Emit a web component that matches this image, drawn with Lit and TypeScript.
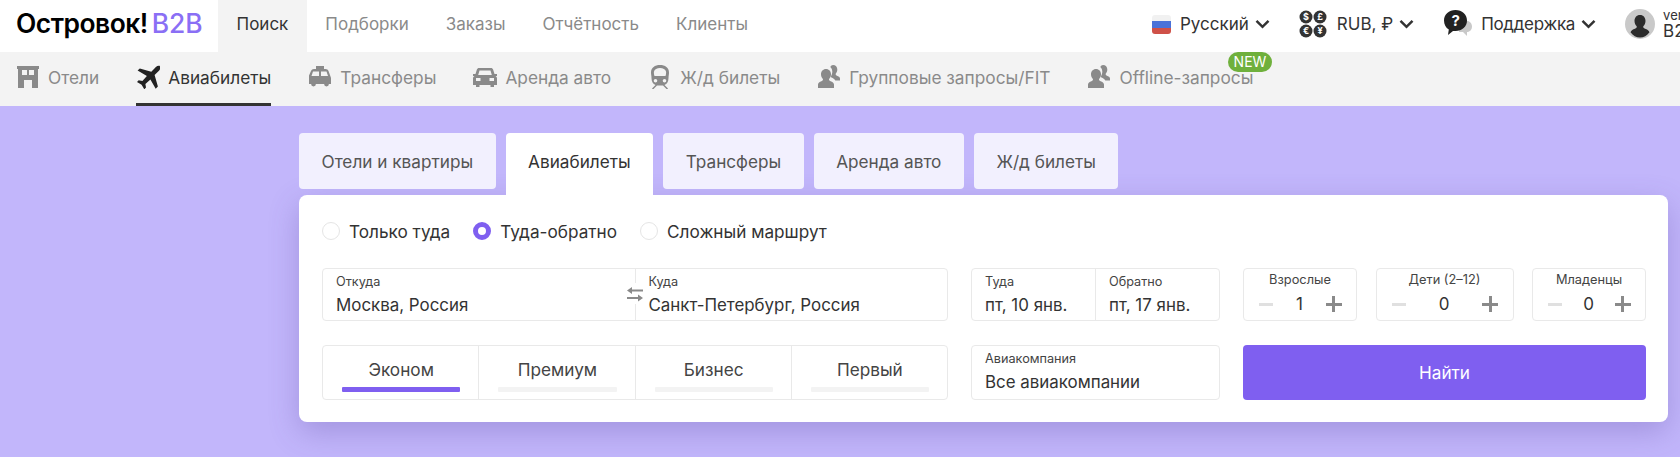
import { LitElement, html, css, svg } from 'lit';
import { customElement } from 'lit/decorators.js';

const icons = {
  hotel: svg`<path fill-rule="evenodd" d="M1 1h22v3h-1v19h-6v-8H8v8H2V4H1zM6 5v5h5V5zm7 0v5h5V5z"/>`,
  plane: svg`<path d="M24.500 1.500c-1.200-1.200-3.200-.8-4.600.6l-4.600 4.600L3.800 3.400 1.600 5.600l9.300 5.300-4.500 5-3.700-.6L1 17l4.600 2.700L8.300 24.300l1.700-1.700-.6-3.700 5-4.500 5.300 9.300 2.200-2.200-3.300-11.500 4.600-4.600c1.400-1.400 1.500-3.100.3-4.100z"/>`,
  taxi: svg`<path fill-rule="evenodd" d="M8 1h8v3h1.500c1.500 0 2.500.8 3 2l2 5.500c.4.700.5 1.300.5 2V19h-2.100a2.400 2.400 0 0 1-4.800 0H7.900a2.400 2.400 0 0 1-4.800 0H1v-8.500L3 6c.5-1.200 1.500-2 3-2h2zM5 6.500 3.500 11H11V6.500zM13 6.500V11h7l-1.500-4.500z"/>`,
  car: svg`<path fill-rule="evenodd" d="M6 3h12c1 0 1.800.6 2.100 1.500L21.500 9H24v2h-1.500c.9.5 1.500 1.500 1.500 2.500V20h-3v2h-3.500v-2h-11v2H3v-2H0v-6.500C0 12.500.6 11.500 1.500 11H0V9h2.500l1.400-4.500C4.200 3.600 5 3 6 3zM6.500 5.500 5.200 10h13.600l-1.300-4.500zM3 13v3h4.500v-3zm13.500 0v3H21v-3z"/>`,
  train: svg`<path fill-rule="evenodd" d="M12 0c5 0 9 2.500 9 7.500 0 2-.5 3.500-.5 5.500 0 3.500-1.500 6-4 7l3.500 3.500-1 1-4-4H9l-4 4-1-1L7.500 20c-2.500-1-4-3.500-4-7 0-2-.5-3.500-.5-5.500C3 2.500 7 0 12 0zM12 3c-3 0-5.500 1.200-6 3.500-.3 1.500 0 3 .5 4.500h11c.5-1.500.8-3 .5-4.500C17.500 4.200 15 3 12 3zM7.500 14a1.800 1.800 0 1 0 0 3.600 1.800 1.800 0 0 0 0-3.600zm9 0a1.800 1.800 0 1 0 0 3.600 1.800 1.800 0 0 0 0-3.600z"/>`,
  group: svg`<path d="M16 0c2.700 0 4.300 2.100 4.300 4.600 0 1.700-.6 3.200-1.600 4.200-.3.900.2 1.400 1.200 1.900 1.500.7 3.100 1.300 3.100 2.900v2h-4.700c-.7-1.500-2.200-2.300-3.800-3.100-.6-.3-.8-.6-.8-1 1-1.300 1.600-3 1.600-4.800 0-2-.7-3.600-2-4.800C13.900.8 14.900 0 16 0z"/><path d="M9 4c3 0 5 2.400 5 5.300 0 1.900-.8 3.700-1.900 4.800-.3 1.100.2 1.700 1.500 2.200 1.800.8 3.400 1.500 3.400 3.300V23H1v-3.400c0-1.800 1.600-2.500 3.400-3.300 1.300-.5 1.800-1.100 1.500-2.200C4.800 13 4 11.200 4 9.300 4 6.400 6 4 9 4z"/>`,
};

const chevron = html`<svg class="chev" viewBox="0 0 15 10"><path d="M1.500 1.800 7.500 7.800 13.500 1.800" fill="none" stroke="currentColor" stroke-width="2.500"/></svg>`;

@customElement('app-root')
export class AppRoot extends LitElement {
  static override styles = css`
    :host {
      display: block;
      width: 1680px;
      height: 457px;
      overflow: hidden;
      background: #c2b6fb;
      font-family: Inter, 'Noto Sans', sans-serif;
      color: #333;
    }

    svg { display: block; flex: none; }

    .top {
      display: flex;
      height: 52px;
      background: #fff;
      font-size: 17px;
      white-space: nowrap;
    }
    .logo {
      width: 218px;
      box-sizing: border-box;
      padding: 9px 0 0 16px;
      font-size: 26.4px;
      line-height: 28px;
      font-weight: 600;
      letter-spacing: -0.5px;
      color: #000;
    }
    .logo span { color: #8a6ff5; font-weight: 500; margin-left: 4px; letter-spacing: 0; }
    .nav { flex: 1; display: flex; }
    .nav a { padding: 0 18.5px; line-height: 48px; color: #8a8a8a; }
    .nav a.on { background: #f3f3f3; color: #333; }
    .right {
      width: 528px;
      flex: none;
      display: flex;
      align-items: center;
      overflow: hidden;
      color: #333;
      padding-bottom: 4px;
      box-sizing: border-box;
    }
    .menu { display: flex; align-items: center; }
    .menu + .menu { margin-left: 29px; }
    .menu.support { letter-spacing: -0.3px; }
    .chev { width: 15px; height: 10px; color: #333; margin-left: 6px; }
    .flag { width: 19px; height: 19px; border-radius: 3px; margin-right: 9px; overflow: hidden; background: linear-gradient(#f1f1f1 0 33%, #4a72d9 33% 66%, #cf5148 66%); }
    .coins { margin-right: 10px; }
    .help { margin-right: 8px; }
    .user { display: flex; align-items: center; margin-left: 29px; }
    .user .who { margin-left: 8px; }
    .user small { display: block; font-size: 13px; line-height: 14px; }
    .user b { display: block; font-weight: 400; font-size: 17px; line-height: 18px; }

    .sub {
      display: flex;
      height: 54px;
      background: #f3f3f3;
      font-size: 17.3px;
      color: #8a8a8a;
      padding-left: 16px;
      gap: 37px;
      white-space: nowrap;
    }
    .sub a { position: relative; display: flex; align-items: center; height: 54px; box-sizing: border-box; padding-bottom: 4px; }
    .sub a svg { width: 24px; height: 24px; fill: #8a8a8a; margin-right: 8px; }
    .sub a.on { color: #333; border-bottom: 3px solid #333; padding-bottom: 1px; }
    .sub a.on svg { fill: #222; }
    .new {
      position: absolute;
      right: -19px;
      top: 0;
      height: 20px;
      padding: 0 6px;
      border-radius: 10px;
      background: #6fb03c;
      color: #fff;
      font-size: 14px;
      line-height: 20px;
    }

    .search { width: 1369px; margin: 27px 0 0 299px; }
    .tabs { display: flex; gap: 10px; align-items: flex-start; }
    .tab {
      height: 56px;
      padding: 0 22.5px;
      display: flex;
      align-items: center;
      border-radius: 4px;
      background: #f2f0fe;
      font-size: 17.2px;
      color: #555;
    }
    .tab.on { height: 62px; padding-bottom: 6px; box-sizing: border-box; background: #fff; color: #333; border-radius: 4px 4px 0 0; }
    .card {
      height: 227px;
      box-sizing: border-box;
      padding: 24px 22px 0 23px;
      background: #fff;
      border-radius: 8px;
      box-shadow: 0 10px 30px rgba(90, 70, 160, 0.3);
    }
    .radios { display: flex; height: 24px; align-items: center; font-size: 17.2px; }
    .radio { display: flex; align-items: center; gap: 9px; margin-right: 23px; }
    .dot { width: 18px; height: 18px; box-sizing: border-box; border-radius: 50%; border: 1px solid #e5e5e5; }
    .dot.on { border: 5px solid #7f5ff0; }

    .grid {
      display: grid;
      grid-template-columns: 626px 249px 1fr;
      grid-template-rows: 53px 55px;
      column-gap: 23px;
      row-gap: 24px;
      margin-top: 25px;
    }
    .box { border: 1px solid #e9e9e9; border-radius: 4px; box-sizing: border-box; display: flex; }
    .field { flex: 1; padding: 6px 13px 0; position: relative; box-sizing: border-box; min-width: 0; }
    .field + .field { border-left: 1px solid #e9e9e9; }
    .field label { display: block; font-size: 12.7px; line-height: 14px; color: #444; }
    .field div { font-size: 16.9px; line-height: 22px; margin-top: 5px; color: #333; }
    .swap { position: absolute; left: -10px; top: 14px; background: #fff; padding: 3px 0 2px; }

    .pax { display: flex; justify-content: space-between; }
    .count { width: 114px; flex-direction: column; align-items: center; padding-top: 3px; }
    .count.wide { width: 138px; }
    .count label { font-size: 12.8px; line-height: 16px; color: #444; }
    .stepper { display: flex; align-items: center; justify-content: space-between; width: 100%; box-sizing: border-box; padding: 0 14px 0 15px; font-size: 17px; line-height: 26px; margin-top: 3px; color: #333; }
    .minus { width: 14px; height: 3px; background: #e0e0e0; }
    .plus { position: relative; width: 16px; height: 16px; }
    .plus::before, .plus::after { content: ''; position: absolute; background: #8a8a8a; }
    .plus::before { left: 0; right: 0; top: 6.500px; height: 3px; }
    .plus::after { top: 0; bottom: 0; left: 6.500px; width: 3px; }

    .cabin { flex: 1; border-left: 1px solid #e9e9e9; display: flex; flex-direction: column; align-items: stretch; padding: 13px 18px 0 19px; font-size: 17.2px; text-align: center; color: #444; }
    .cabin:first-child { border-left: 0; }
    .cabin span { line-height: 22px; }
    .cabin i { display: block; height: 5px; margin-top: 6px; border-radius: 1px; background: #f3f3f3; }
    .cabin.on i { background: #7f5ff0; }

    .find { border-radius: 4px; background: #7f5ff0; color: #fff; font-size: 17.2px; display: flex; align-items: center; justify-content: center; }
  `;

  private subItem(icon: keyof typeof icons, label: string, on = false, badge = false) {
    return html`<a class=${on ? 'on' : ''}>
      <svg viewBox="0 0 24 24">${icons[icon]}</svg>${label}
      ${badge ? html`<span class="new">NEW</span>` : ''}
    </a>`;
  }

  private counter(label: string, value: number, wide = false) {
    return html`<div class="box count ${wide ? 'wide' : ''}">
      <label>${label}</label>
      <div class="stepper"><span class="minus"></span>${value}<span class="plus"></span></div>
    </div>`;
  }

  override render() {
    return html`
      <div class="top">
        <div class="logo">Островок!<span>B2B</span></div>
        <div class="nav">
          <a class="on">Поиск</a>
          <a>Подборки</a>
          <a>Заказы</a>
          <a>Отчётность</a>
          <a>Клиенты</a>
        </div>
        <div class="right">
          <div class="menu"><div class="flag"></div>Русский${chevron}</div>
          <div class="menu">
            <svg class="coins" viewBox="0 0 28 28" width="28" height="28">
              <g fill="#333">
                <circle cx="7" cy="7" r="6.500"/><circle cx="21" cy="7" r="6.500"/>
                <circle cx="7" cy="21" r="6.500"/><circle cx="21" cy="21" r="6.500"/>
              </g>
              <g fill="#fff" font-size="9" font-weight="700" font-family="Inter" text-anchor="middle">
                <text x="7" y="10.300">$</text><text x="21" y="10.300">£</text>
                <text x="7" y="24.300">€</text><text x="21" y="24.300">¥</text>
              </g>
            </svg>
            RUB, ₽${chevron}
          </div>
          <div class="menu support">
            <svg class="help" viewBox="0 0 30 30" width="30" height="30">
              <path fill="#c9c9c9" d="M18 12h6c3 0 5 2.500 5 5.500S27 23 24 23v4l-4-4h-4z"/>
              <path fill="#222" d="M12.500 1C19 1 24 5.500 24 11.500S19 22 12.500 22H10l-5 4 .8-5.400C2.800 18.700 1 15.400 1 11.500 1 5.500 6 1 12.500 1z"/>
              <text x="12.500" y="17" fill="#fff" font-size="15" font-weight="700" font-family="Inter" text-anchor="middle">?</text>
            </svg>
            Поддержка${chevron}
          </div>
          <div class="user">
            <svg viewBox="0 0 30 30" width="30" height="30">
              <circle cx="15" cy="15" r="15" fill="#c9c9c9"/>
              <path fill="#2b2b2b" d="M15 6c3.500 0 5.500 2.700 5.500 6 0 2.200-.9 4-2.200 5.200-.3 1.300.3 2 1.800 2.600 2 .8 3.600 1.600 4.400 3.400C22 26.600 18.700 28.500 15 28.500S8 26.600 5.500 23.200c.8-1.800 2.400-2.600 4.400-3.400 1.500-.6 2.100-1.300 1.800-2.600-1.300-1.200-2.200-3-2.200-5.200 0-3.300 2-6 5.500-6z"/>
            </svg>
            <div class="who"><small>vera</small><b>B2B</b></div>
          </div>
        </div>
      </div>

      <div class="sub">
        ${this.subItem('hotel', 'Отели')}
        ${this.subItem('plane', 'Авиабилеты', true)}
        ${this.subItem('taxi', 'Трансферы')}
        ${this.subItem('car', 'Аренда авто')}
        ${this.subItem('train', 'Ж/д билеты')}
        ${this.subItem('group', 'Групповые запросы/FIT')}
        ${this.subItem('group', 'Offline-запросы', false, true)}
      </div>

      <div class="search">
        <div class="tabs">
          <div class="tab">Отели и квартиры</div>
          <div class="tab on">Авиабилеты</div>
          <div class="tab">Трансферы</div>
          <div class="tab">Аренда авто</div>
          <div class="tab">Ж/д билеты</div>
        </div>
        <div class="card">
          <div class="radios">
            <div class="radio"><span class="dot"></span>Только туда</div>
            <div class="radio"><span class="dot on"></span>Туда-обратно</div>
            <div class="radio"><span class="dot"></span>Сложный маршрут</div>
          </div>
          <div class="grid">
            <div class="box">
              <div class="field"><label>Откуда</label><div>Москва, Россия</div></div>
              <div class="field">
                <svg class="swap" viewBox="0 0 18 16" width="18" height="16">
                  <path fill="#8a8a8a" d="M6 1v2.500h11v2H6V8L1 4.500zM12 8.500 17 12l-5 3.500V13H1v-2h11z"/>
                </svg>
                <label>Куда</label><div>Санкт-Петербург, Россия</div>
              </div>
            </div>
            <div class="box">
              <div class="field"><label>Туда</label><div>пт, 10 янв.</div></div>
              <div class="field"><label>Обратно</label><div>пт, 17 янв.</div></div>
            </div>
            <div class="pax">
              ${this.counter('Взрослые', 1)}
              ${this.counter('Дети (2–12)', 0, true)}
              ${this.counter('Младенцы', 0)}
            </div>
            <div class="box">
              <div class="cabin on"><span>Эконом</span><i></i></div>
              <div class="cabin"><span>Премиум</span><i></i></div>
              <div class="cabin"><span>Бизнес</span><i></i></div>
              <div class="cabin"><span>Первый</span><i></i></div>
            </div>
            <div class="box"><div class="field"><label>Авиакомпания</label><div>Все авиакомпании</div></div></div>
            <div class="find">Найти</div>
          </div>
        </div>
      </div>
    `;
  }
}

declare global {
  interface HTMLElementTagNameMap {
    'app-root': AppRoot;
  }
}
